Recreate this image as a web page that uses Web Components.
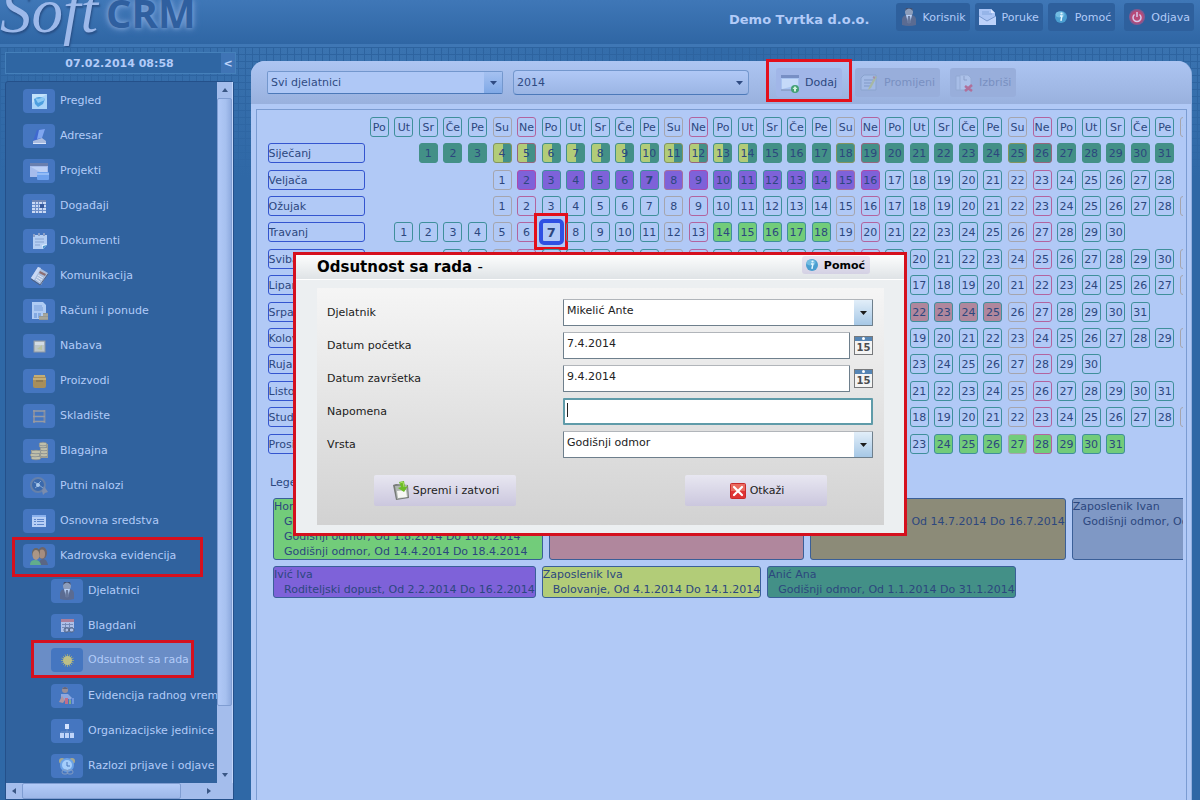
<!DOCTYPE html>
<html lang="hr">
<head>
<meta charset="utf-8">
<title>SoftCRM – Odsutnost sa rada</title>
<style>
html,body{margin:0;height:100%;overflow:hidden}
body{font:11px/15px "DejaVu Sans",Verdana,sans-serif;background:#2f68a6}
</style>
</head>
<body>
<crm-app></crm-app>
<script>
const ICONS={
globe:'<rect x="3" y="3" width="15" height="15" fill="#a9d3f8"/><path d="M3 3h15L3 12z" fill="#c3e2fb"/><path d="M5 8q5-4 11 0l-2 5-5 3-3-3z" fill="#4d9fdf"/><path d="M6 7q4 2 8-1l2 3-7 3z" fill="#8cc9f5"/>',
book:'<path d="M8 4l8-1-3 9-9 3z" fill="#3f68cf"/><path d="M10 4l6-1-3 9-5 1z" fill="#7fa6ef"/><path d="M4 15l9-3 4 3v3H4z" fill="#a9bbdf"/><path d="M4 17h13v1H4z" fill="#dbe6fa"/>',
window:'<rect x="1" y="2" width="18" height="14" fill="#a6bcec"/><rect x="1" y="2" width="18" height="3" fill="#6a7fae"/><path d="M2 6h16v9z" fill="#bdd0f5"/><rect x="8" y="11" width="12" height="8" rx="1" fill="#6ea2ee"/><path d="M8 12h12v2H8z" fill="#93bcf6"/>',
events:'<rect x="3" y="4" width="14" height="13" fill="#cad9f4"/><path d="M3 4h14v2H3z" fill="#6f86b5"/><path d="M3 8.500h14M3 11.500h14M3 14.500h14M6.500 6v11M9.500 6v11M13.500 6v11" stroke="#6e8fc9"/><rect x="11" y="8" width="4" height="4" fill="#375a9c"/>',
doc:'<path d="M4 4h14v10l-4 4H4z" fill="#b4cef3"/><path d="M4 3h2v3H4zM9 2h2v3H9zM14 2h2v3h-2z" fill="#8b9fc6"/><path d="M6 8h9M6 11h9M6 14h5" stroke="#86a3d1"/><path d="M18 13l-5 1 1 4z" fill="#e1f1ff"/><path d="M18 14l-4 4v-3z" fill="#4d97ce"/>',
phone:'<path d="M9 1l10 6-7 12L2 12z" fill="#a9bddc"/><path d="M9 1L2 12l3 2 7-12z" fill="#c9d8f4"/><path d="M11 5l6 3-1 2-6-3z" fill="#8c6e73"/><path d="M9 9l5 3M8 11l5 3M7 13l4 3" stroke="#e1e7f5"/><path d="M2 13l9 6 8-11" fill="none" stroke="#53617e"/>',
invoice:'<path d="M3 1h11l3 3v14H3z" fill="#afccf4"/><path d="M5 5h8M5 7h9M5 9h9" stroke="#779dda"/><path d="M5 12h3v5H5zM9 12h3v5H9z" fill="#83aae2"/><path d="M10 15h4v-3h5v7h-9z" fill="#959994"/><path d="M10 17h9M14 14h5" stroke="#b7b3a1"/>',
box:'<rect x="5" y="5" width="11" height="11" fill="#bdc6c8" stroke="#8d98a6"/><rect x="6" y="6" width="9" height="3" fill="#d3dce3"/><path d="M8 13l5-4v5z" fill="#b9c4a3"/>',
crate:'<rect x="4" y="5" width="13" height="12" rx="2" fill="#a88e5a"/><path d="M4 8h13M5 5h11" stroke="#c4ad76" stroke-width="2"/><path d="M7 10h7" stroke="#75674f"/>',
shelf:'<path d="M5 4v13M15.500 4v13" fill="none" stroke="#7f8ba4" stroke-width="2"/><path d="M4 5h12M4 10.500h12M4 15.500h12" stroke="#969aa3" stroke-width="1.400"/>',
coins:'<path d="M11 3h8v14h-8zM2 9h9v9H2z" fill="#a09f91"/><g fill="#c0bfaa" stroke="#838b91" stroke-width=".7"><ellipse cx="15" cy="14" rx="4" ry="1.800"/><ellipse cx="15" cy="11" rx="4" ry="1.800"/><ellipse cx="15" cy="8" rx="4" ry="1.800"/><ellipse cx="14" cy="5" rx="4" ry="1.800"/><ellipse cx="14" cy="3" rx="4" ry="1.800"/><ellipse cx="7" cy="17" rx="5" ry="1.800"/><ellipse cx="6" cy="14" rx="5" ry="1.800"/><ellipse cx="7" cy="11" rx="5" ry="1.800"/></g>',
travel:'<circle cx="9" cy="9" r="7" fill="#3a69ad" stroke="#6681aa" stroke-width="2"/><path d="M5 6l4 2 3-3M6 12l4-3 4 3" stroke="#85a7d2" fill="none"/><circle cx="9" cy="9" r="2" fill="#a8c8ec"/><path d="M15 10l4 6-3 1-2 2-1-4z" fill="#7b8cad"/>',
list:'<rect x="3" y="4" width="14" height="12" fill="#b7cff6"/><path d="M3 4h14v2H3z" fill="#8ab0ec"/><path d="M5 8.500h2M8 8.500h7M5 10.500h2M8 10.500h7M5 13.500h2M8 13.500h7" stroke="#5e86ca"/>',
people:'<ellipse cx="13.500" cy="7" rx="4.500" ry="6" fill="#6f6568"/><ellipse cx="13" cy="8" rx="3" ry="4.500" fill="#a58d80"/><path d="M10 19q0-6 4-6t5 6z" fill="#5a6684"/><ellipse cx="7" cy="7" rx="4" ry="5" fill="#6c6660"/><ellipse cx="7" cy="9" rx="3.500" ry="5" fill="#ab9685"/><path d="M1 19q0-5 5-5t6 5z" fill="#62ad8c"/>',
person:'<circle cx="10" cy="5" r="4" fill="#8c9dbb"/><path d="M6 4q4-5 8 0l-1-3h-6z" fill="#414f70"/><path d="M3 18v-6q1-4 5-4h4q4 0 5 4v6q-7 2-14 0z" fill="#5a6b92"/><path d="M7 8h6l-2 8H9z" fill="#b9d1f8"/><path d="M9 9h2l1 6-2 2-2-2z" fill="#66779b"/>',
holiday:'<rect x="4" y="3" width="13" height="13" fill="#adc0e8"/><path d="M4 3h13v3H4z" fill="#ab7f9b"/><path d="M5 8.500h11M5 11.500h11M8.500 7v8M12.500 7v8" stroke="#758bb8"/><rect x="7" y="12" width="5" height="4" rx="2" fill="none" stroke="#4d6183"/><rect x="12" y="12" width="5" height="4" rx="2" fill="none" stroke="#4d6183"/>',
sun:'<path d="M10.500 4v13M4 10.500h13M6 6l9 9M15 6l-9 9M8 4.500l5 12M13 4.500l-5 12M4.500 8l12 5M4.500 13l12-5" stroke="#94a585"/><circle cx="10.500" cy="10.500" r="4.500" fill="#bdbf87"/>',
worker:'<circle cx="8" cy="4" r="3" fill="#9a8e95"/><path d="M5 3q3-4 6 0z" fill="#61667c"/><path d="M4 8h7l4 4-2 2-3-2v2H4z" fill="#8ca7df"/><path d="M2 16l3-6 3 4-2 3z" fill="#b095a0"/><path d="M8 12h3v6H8z" fill="#c06d8c"/><path d="M12 14h2v4h-2z" fill="#80ad8b"/><path d="M15 12h2v6h-2z" fill="#7094de"/>',
org:'<path d="M10 7v4M4 14v-3h12v3M10 11v3" fill="none" stroke="#688fc9"/><rect x="8" y="3" width="4" height="5" fill="#d3e2fd"/><rect x="3" y="12" width="4" height="5" fill="#bfd4f9"/><rect x="8" y="12" width="4" height="5" fill="#bfd4f9"/><rect x="13" y="12" width="4" height="5" fill="#bfd4f9"/>',
clock:'<circle cx="5" cy="5" r="3" fill="#a7a98e"/><circle cx="15" cy="5" r="3" fill="#a7a98e"/><circle cx="10" cy="9" r="6" fill="#a5cefb" stroke="#6ba2e6" stroke-width="2"/><path d="M10 6v4h3" fill="none" stroke="#4a79bc"/><rect x="5" y="14" width="6" height="4" rx="2" fill="none" stroke="#829bc2"/><rect x="10" y="14" width="6" height="4" rx="2" fill="none" stroke="#829bc2"/>',
mail:'<path d="M1 8V2h12l4 4v12H1z" fill="#aac4f4"/><path d="M13 2v4h4z" fill="#dae6ff"/><path d="M1 9l8 5 9-5v9H1z" fill="#bdd2fa"/><path d="M1 9l8 5 9-5" stroke="#7999cf" fill="none"/><path d="M4 5h7M4 7h10" stroke="#82a5dc"/>',
info:'<circle cx="10" cy="10" r="6" fill="#4b9ed0"/><ellipse cx="9" cy="7.500" rx="4.500" ry="3" fill="#73bce2"/><circle cx="10.500" cy="6.500" r="1.100" fill="#e3f6ff"/><path d="M9 9h2l-1 4h1" stroke="#e3f6ff" fill="none" stroke-width="1.400"/>',
power:'<circle cx="10" cy="10" r="8" fill="#87588f"/><circle cx="10" cy="10" r="6.500" fill="#b74a78"/><path d="M7.500 7.500a4 4 0 1 0 5 0M10 5v5" fill="none" stroke="#d8c9ec" stroke-width="1.500"/>',
add:'<rect x="1" y="2" width="18" height="15" fill="#a9c4f1"/><rect x="1" y="2" width="18" height="3" fill="#778fc5"/><path d="M2 6h16v6L2 16z" fill="#c5daf9"/><path d="M1 17h18" stroke="#7b8db2"/><circle cx="15" cy="16" r="4" fill="#43a174"/><path d="M15 13l2.500 3H16v2.500h-2V16h-1.500z" fill="#d1f4dd"/>',
edit:'<path d="M5 2h12v15H2V5z" fill="#a3bae5" stroke="#8aa3ce"/><path d="M5 7h9M5 10h8M5 13h7" stroke="#8099c7"/><path d="M16 3l2 1-6 11-3 2 1-3z" fill="#a7b8a4"/><path d="M14 4l2 1" stroke="#a290ae" stroke-width="2"/>',
del:'<path d="M2 3h8v14H2z" fill="#a7bde7" stroke="#92a9d3"/><path d="M6 2h8l3 3v12H6z" fill="#acc1e9" stroke="#94abd5"/><path d="M10 3v4h3" stroke="#8b9fc9" fill="none"/><path d="M11 13l7 5M18 12l-7 6" stroke="#b0709b" stroke-width="2.600"/>',
save:'<path d="M2 4l3-1 12 1 1 13-13 2z" fill="#777b77"/><path d="M4 5l12-1 1 12-11 2z" fill="#b0b6b2"/><path d="M6 10l9-1 1 7-9 1z" fill="#f7f7f4"/><path d="M8 1l5-1 1 6 3-1-4 6-6-4 3-1z" fill="#6cbc27"/><path d="M9 2l3-1 1 5" fill="none" stroke="#a9df60"/>',
cancel:'<rect x="2" y="2" width="16" height="16" rx="2" fill="#c82a2c"/><path d="M3 3h14v7H3z" fill="#ea6b5f"/><path d="M3 10h14v7H3z" fill="#df3435"/><path d="M6 6l8 8M14 6l-8 8" stroke="#fff" stroke-width="2.200" stroke-linecap="round"/>'
};
function define(name,html,setup){
  customElements.define(name,class extends HTMLElement{
    connectedCallback(){
      if(this.shadowRoot)return;
      const t=document.createElement('template');
      t.innerHTML=typeof html==='function'?html(this):html;
      this.attachShadow({mode:'open'}).append(t.content.cloneNode(true));
      if(setup)setup(this,this.shadowRoot);
    }
  });
}
define('crm-icon',el=>`<style>:host{display:block;width:20px;height:20px;flex:none}svg{display:block}</style>
<svg width="20" height="20" viewBox="0 0 20 20" aria-hidden="true">${ICONS[el.getAttribute('name')]}</svg>`);

define('header-button',el=>`<style>
:host{display:block}
button{display:flex;align-items:center;gap:4px;height:28px;padding:0 4px 0 3px;border:0;border-radius:3px;background:#2e609d;color:#b2cbf8;font:inherit;white-space:nowrap}
</style><button type="button"><crm-icon name="${el.getAttribute('icon')}"></crm-icon><slot></slot></button>`);

define('crm-header',`<style>
:host{display:block;height:44px;border-bottom:3px solid #3f77b5;background:linear-gradient(#3f77b7,#2f66a4)}
.bar{display:flex;justify-content:space-between;height:44px}
.logo{display:flex;align-items:flex-start;gap:8px;margin-top:-17px;white-space:nowrap}
.soft{font:italic 63px/56px "Liberation Serif",serif;color:#9db9ea;text-shadow:1px 2px 2px #284f86}
.crm{font:bold 40px/60px "Open Sans",sans-serif;color:#2f5f9f;text-shadow:0 0 5px #87aadd,0 0 8px #6c96d0}
.user{display:flex;align-items:flex-start;padding:3px 6px 0 0}
.name{font-size:13px;line-height:34px;font-weight:bold;color:#b2cbf8;margin-right:26px}
nav{display:flex;gap:5px}
.out{margin-left:4px}
</style>
<div class="bar">
<div class="logo"><span class="soft">Soft</span><span class="crm">CRM</span></div>
<div class="user"><span class="name">Demo Tvrtka d.o.o.</span>
<nav><header-button icon="person">Korisnik</header-button><header-button icon="mail">Poruke</header-button><header-button icon="info">Pomoć</header-button><header-button class="out" icon="power">Odjava</header-button></nav></div>
</div>`);

define('nav-item',el=>`<style>
:host{display:block;position:relative;height:35px}
a{display:flex;align-items:center;gap:5px;height:35px;padding-left:17px;color:#b2cbf8;text-decoration:none;white-space:nowrap}
.i{flex:none;display:flex;align-items:center;justify-content:center;width:32px;height:24px;border-radius:4px;background:#4576c0}
:host([sub]) a{padding-left:45px}
:host([selected]) a{margin:0 26px 0 28px;padding-left:17px;height:33px;background:#6a8dc6}
:host([marked])::after{content:"";position:absolute;box-sizing:border-box;border:3px solid #d5101e;inset:-1px 14px -4px 6px}
:host([marked][selected])::after{inset:-3px 23px 0 25px}
</style><a href="#"><span class="i"><crm-icon name="${el.getAttribute('icon')}"></crm-icon></span><slot></slot></a>`);

const NAV=[['globe','Pregled'],['book','Adresar'],['window','Projekti'],['events','Događaji'],['doc','Dokumenti'],['phone','Komunikacija'],['invoice','Računi i ponude'],['box','Nabava'],['crate','Proizvodi'],['shelf','Skladište'],['coins','Blagajna'],['travel','Putni nalozi'],['list','Osnovna sredstva'],['people','Kadrovska evidencija','marked'],['person','Djelatnici','sub'],['holiday','Blagdani','sub'],['sun','Odsutnost sa rada','sub selected marked'],['worker','Evidencija radnog vremena','sub'],['org','Organizacijske jedinice','sub'],['clock','Razlozi prijave i odjave','sub']];
define('crm-sidebar',`<style>
:host{display:flex;flex-direction:column;gap:7px;padding:5px 0 0 5px;box-sizing:border-box}
.date{display:flex;height:20px;border:1px solid #4580ba;margin-right:1px;background:#2f66a3;color:#b2cbf8;font-weight:bold;line-height:21px}
.date time{flex:1;text-align:center;padding-left:12px}
.date button{width:14px;border:0;padding:0;background:#3f74b5;color:#c0d6fb;font:bold 11px "DejaVu Sans",sans-serif}
.frame{flex:1;min-height:0;display:grid;grid-template:minmax(0,1fr) 16px/minmax(0,1fr) 16px;border:1px solid #24508a;border-radius:3px 3px 0 0;background:#30629e;margin-right:3px}
nav{overflow:hidden;padding-top:1px}
.v,.h,.c{background:#a4bdec}
.v,.h{display:flex}.v{flex-direction:column;border-right:1px solid #c2d6fa;box-sizing:border-box}
.b{flex:none;display:flex;align-items:center;justify-content:center;width:16px;height:16px}
.t{box-sizing:border-box;border:1px solid #7f9dd2;border-radius:2px}
.v .t{flex:10;background:linear-gradient(90deg,#b1c9f7,#a6c0ef 60%,#8fabdf)}
.h .t{flex:8;background:linear-gradient(#b3cbf8,#9db7e8)}
.r{flex:1}
</style>
<div class="date"><time datetime="2014-02-07T08:58">07.02.2014 08:58</time><button type="button" aria-label="Sakrij izbornik">&lt;</button></div>
<div class="frame"><nav>${NAV.map(([i,t,a=''])=>`<nav-item icon="${i}" ${a}>${t}</nav-item>`).join('')}</nav>
<div class="v"><span class="b"><svg width="6" height="4"><path d="M0 4l3-4 3 4z" fill="#3a5785"/></svg></span><span class="t"></span><span class="r"></span><span class="b"><svg width="6" height="4"><path d="M0 0l3 4 3-4z" fill="#3a5785"/></svg></span></div>
<div class="h"><span class="b"><svg width="4" height="6"><path d="M4 0L0 3l4 3z" fill="#3a5785"/></svg></span><span class="t"></span><span class="r"></span><span class="b"><svg width="4" height="6"><path d="M0 0l4 3-4 3z" fill="#3a5785"/></svg></span></div><div class="c"></div></div>`);

define('tool-button',el=>`<style>
:host{display:block;position:relative}
button{display:flex;align-items:center;gap:5px;height:29px;padding:0 5px 0 4px;border:0;border-radius:3px;background:#a1b6e8;color:#2c477e;font:inherit;white-space:nowrap}
button:disabled{background:#98aedb;color:#7990c1}
:host([marked])::after{content:"";position:absolute;border:3px solid #e3101c;inset:-9px -10px -5px}
</style><button type="button" ${el.hasAttribute('off')?'disabled':''}><crm-icon name="${el.getAttribute('icon')}"></crm-icon><slot></slot></button>`);

const SELECT=`.sel{display:grid;box-sizing:border-box}
.sel select,.sel i{grid-area:1/1}
.sel select{appearance:none;min-width:0;width:100%;border:0;margin:0;background:none;font:inherit;color:inherit;outline:0}
.sel i{justify-self:end;width:18px;display:flex;align-items:center;justify-content:center;pointer-events:none}`;
const ARROW='<i><svg width="7" height="4" aria-hidden="true"><path d="M0 0h7L3.500 4z" fill="currentColor"/></svg></i>';

define('crm-toolbar',`<style>${SELECT}
:host{display:flex;align-items:center;height:43px;padding-left:16px;box-sizing:border-box;border-radius:14px 14px 0 0;background:linear-gradient(#adc5f2,#99b1de)}
.sel{width:236px;height:23px;border:1px solid #7397cd;border-bottom-color:#4c79b9;border-radius:2px;background:#afc8f6;color:#2f4b82;margin-right:10px}
.sel select{padding:0 3px}
.sel i{background:linear-gradient(#a5c1f1,#80a9e6)}
.year{height:25px;border-radius:4px;background:linear-gradient(#b0c8f6,#9bb5e4)}
.year i{background:none}
.tools{display:flex;gap:10px;margin-left:17px}
tool-button:first-child{margin-right:3px}
</style>
<label class="sel"><select aria-label="Djelatnik"><option>Svi djelatnici</option></select>${ARROW}</label>
<label class="sel year"><select aria-label="Godina"><option>2014</option></select>${ARROW}</label>
<div class="tools"><tool-button icon="add" marked>Dodaj</tool-button><tool-button icon="edit" off>Promijeni</tool-button><tool-button icon="del" off>Izbriši</tool-button></div>`);

const COLS=34,DAYS=['Po','Ut','Sr','Če','Pe','Su','Ne'];
const MONTHS=[['Siječanj',2,31],['Veljača',5,28],['Ožujak',5,31],['Travanj',1,30],['Svibanj',3,31],['Lipanj',6,30],['Srpanj',1,31],['Kolovoz',4,31],['Rujan',0,30],['Listopad',2,31],['Studeni',5,30],['Prosinac',0,31]];
const ABSENCES=[[0,1,31,'teal'],[0,4,14,'half'],[1,2,16,'purple'],[3,14,18,'green'],[6,14,16,'brown'],[6,21,25,'pink'],[7,1,10,'green'],[11,24,31,'green']];
function kind(c){return c%7===5?'su':c%7===6?'ne':''}
function dayCell(m,c){
  const [,start,len]=MONTHS[m],d=c-start+1;
  if(d<1||d>len)return'<td></td>';
  const fill=ABSENCES.filter(a=>a[0]===m&&d>=a[1]&&d<=a[2]).map(a=>a[3]).join(' ');
  const extra=m===1&&d===7?'today':m===3&&d===7?'today picked':'';
  return`<td><span class="${kind(c)} ${fill} ${extra}">${d}</span></td>`;
}
define('absence-calendar',`<style>
:host{display:block;overflow:hidden;color:#2c477e}
table{table-layout:fixed;border-collapse:collapse;width:calc(100% + 19px);height:343px}
.m{width:102px}
thead tr{height:26px}
th,td{padding:0;font-weight:normal;text-align:center}
span{position:relative;display:block;box-sizing:border-box;width:19px;height:20px;margin:0 auto;border:1px solid #3f8f9b;border-radius:3px;line-height:19px;white-space:nowrap}
th[scope=row] span{width:97px;border-color:#3455cf;text-align:left}
.su{border-color:#a5a5ae}.ne{border-color:#b2649e}
.teal{background:#439087;border-color:#439087}
.teal.su{border-color:#83955f}.teal.ne{border-color:#95667c}
.half{background:linear-gradient(90deg,#b2cc78 9px,#439087 9px)}
.purple{background:#7e62d9}.purple.su{border-color:#a6719d}.purple.ne{border-color:#ae4aab}
.green{background:#72cc7a}.pink{background:#b0879d}.brown{background:#8c8b78}
.today{font-weight:bold}
.picked{width:25px;height:26px;margin:-3px 0;border:4px solid #2f50e3;border-radius:5px;line-height:19px;font-size:13px}
.picked::after{content:"";position:absolute;border:3px solid #e3101c;inset:-10px -8px -9px -9px}
</style>
<table><thead><tr><td class="m"></td>${Array.from({length:COLS},(_,c)=>`<th scope="col"><span class="${kind(c)}">${DAYS[c%7]}</span></th>`).join('')}</tr></thead>
<tbody>${MONTHS.map((m,i)=>`<tr><th scope="row"><span>${m[0]}</span></th>${Array.from({length:COLS},(_,c)=>dayCell(i,c)).join('')}</tr>`).join('')}</tbody></table>`);

define('legend-card',el=>`<style>
:host{display:block;box-sizing:border-box;flex:none;border:1px solid #3a5f98;border-radius:3px;background:var(--fill);white-space:nowrap;color:#2c477e}
.b{padding-left:10px}
</style><div>${el.getAttribute('name')}</div><div class="b"><slot></slot></div>`);

define('absence-legend',`<style>
:host{display:block;overflow:hidden;color:#2c477e;padding:0 0 0 8px}
h2{font:inherit;margin:0 -3px 8px}
.row{display:flex;gap:6px;margin-bottom:6px}
</style><h2>Legenda</h2>
<div class="row">
<legend-card style="--fill:#72cc7a" name="Horvat Ana"><div>Godišnji odmor, Od 24.12.2014 Do 31.12.2014</div><div>Godišnji odmor, Od 1.8.2014 Do 10.8.2014</div><div>Godišnji odmor, Od 14.4.2014 Do 18.4.2014</div></legend-card>
<legend-card style="--fill:#b0879d" name="Marić Marko">Godišnji odmor, Od 21.7.2014 Do 25.7.2014</legend-card>
<legend-card style="--fill:#8c8b78" name="Babić Petar">Godišnji odmor, Od 14.7.2014 Do 16.7.2014</legend-card>
<legend-card style="--fill:#7f98c5" name="Zaposlenik Ivan">Godišnji odmor, Od 21.7.2014 Do 25.7.2014</legend-card>
</div>
<div class="row">
<legend-card style="--fill:#7e62d9" name="Ivić Iva">Roditeljski dopust, Od 2.2.2014 Do 16.2.2014</legend-card>
<legend-card style="--fill:#b2cc78" name="Zaposlenik Iva">Bolovanje, Od 4.1.2014 Do 14.1.2014</legend-card>
<legend-card style="--fill:#439087" name="Anić Ana">Godišnji odmor, Od 1.1.2014 Do 31.1.2014</legend-card>
</div>`);

const CAL='<button type="button" class="cal" aria-label="Odaberi datum"><svg width="19" height="19" viewBox="0 0 19 19"><rect x=".5" y=".5" width="18" height="18" fill="#f4f4f4" stroke="#77797c"/><path d="M1 1h17v4H1z" fill="#5585b5"/><circle cx="9.500" cy="2.500" r="1.500" fill="#fff"/><text x="9.500" y="15" text-anchor="middle" font-size="10" font-weight="bold" font-family="DejaVu Sans" fill="#4a4d50">15</text></svg></button>';
define('absence-dialog',`<style>${SELECT}
:host{display:block;position:fixed;left:50%;top:252px;width:614px;margin-left:-307px;box-sizing:border-box;border:3px solid #d5101e;background:#eceff1;color:#1b1b1b}
header{display:flex;justify-content:space-between;align-items:flex-start;height:24px;padding:0 34px 0 21px;background:linear-gradient(#fcfdfd,#dfe3e6);border-bottom:1px solid #fff}
h1{margin:0;font-size:15px;line-height:24px;color:#000}h1 small{font-size:15px;font-weight:normal}
header button{display:flex;align-items:center;gap:2px;height:18px;margin-top:1px;padding:0 5px 0 0;border:0;border-radius:3px;background:linear-gradient(#e8e6f1,#d4d1e4);font:bold 11px "DejaVu Sans",sans-serif;color:#000}
form{margin:8px 20px 8px 21px;padding:11px 11px 19px 10px;background:linear-gradient(#f5f5f5,#d2d2d2);display:grid;grid-template-columns:236px minmax(0,1fr);gap:6px 0;align-items:center}
.sel,input{height:27px;box-sizing:border-box;border:1px solid #6e7f8c;border-top-color:#b1b5ba;background:#fff;border-radius:1px}
.sel select,input{padding:0 3px 5px;font:inherit;color:#222}
.sel i{background:linear-gradient(#e2eef9,#a6c8e6)}
input{width:100%;min-width:0;margin:0;outline:0}
.f{display:flex;align-items:center;gap:3px;height:27px}
.cal{border:0;padding:0;background:none;width:20px;flex:none;height:19px;display:block}
.focus{position:relative}.focus input{border:2px solid #5f9ba9}
.focus::after{content:"";position:absolute;left:4px;top:5px;width:1px;height:14px;background:#222}
.act{grid-column:1/3;display:flex;justify-content:space-between;padding:11px 46px 0 47px}
.act button{display:flex;align-items:center;justify-content:center;gap:2px;width:142px;height:31px;border:0;border-radius:2px;background:linear-gradient(#e8e7f1,#cbc7de);font:inherit;color:#222}
</style>
<header><h1>Odsutnost sa rada <small>-</small></h1><button type="button"><crm-icon name="info"></crm-icon>Pomoć</button></header>
<form>
<label for="emp">Djelatnik</label><div class="sel"><select id="emp"><option>Mikelić Ante</option></select>${ARROW}</div>
<label for="from">Datum početka</label><div class="f"><input id="from" value="7.4.2014">${CAL}</div>
<label for="to">Datum završetka</label><div class="f"><input id="to" value="9.4.2014">${CAL}</div>
<label for="note">Napomena</label><div class="f focus"><input id="note"></div>
<label for="kind">Vrsta</label><div class="sel"><select id="kind"><option>Godišnji odmor</option></select>${ARROW}</div>
<div class="act"><button type="button"><crm-icon name="save"></crm-icon>Spremi i zatvori</button><button type="button"><crm-icon name="cancel"></crm-icon>Otkaži</button></div>
</form>`,(el)=>{el.setAttribute('role','dialog');el.setAttribute('aria-label','Odsutnost sa rada')});

define('crm-app',`<style>
:host{display:flex;flex-direction:column;height:100vh;overflow:hidden}
.body{flex:1;min-height:0;display:grid;grid-template-columns:237px minmax(0,1fr);column-gap:14px;
background:linear-gradient(rgba(47,104,166,0),#2f68a6 130px),repeating-linear-gradient(90deg,#2d639f 0 1px,transparent 1px 7px),repeating-linear-gradient(#2d639f 0 1px,transparent 1px 7px),linear-gradient(90deg,#346ca9,#3b74b1 30%,#316aa8 60%,#3a73b0)}
main{margin:14px 8px 0 0;border-radius:14px 14px 0 0;display:flex;flex-direction:column;min-width:0;background:#b1c9f6;box-sizing:border-box;border-right:1px solid #93b0e0}
.pane{flex:1;margin:5px 4px 0 5px;border:1px solid #7b9cd2;border-bottom:0;padding:4px 3px 0 8px}
absence-legend{margin-top:18px}
</style>
<crm-header></crm-header>
<div class="body"><crm-sidebar></crm-sidebar>
<main><crm-toolbar></crm-toolbar><div class="pane"><absence-calendar></absence-calendar><absence-legend></absence-legend></div></main></div>
<absence-dialog></absence-dialog>`);
</script>
</body>
</html>
